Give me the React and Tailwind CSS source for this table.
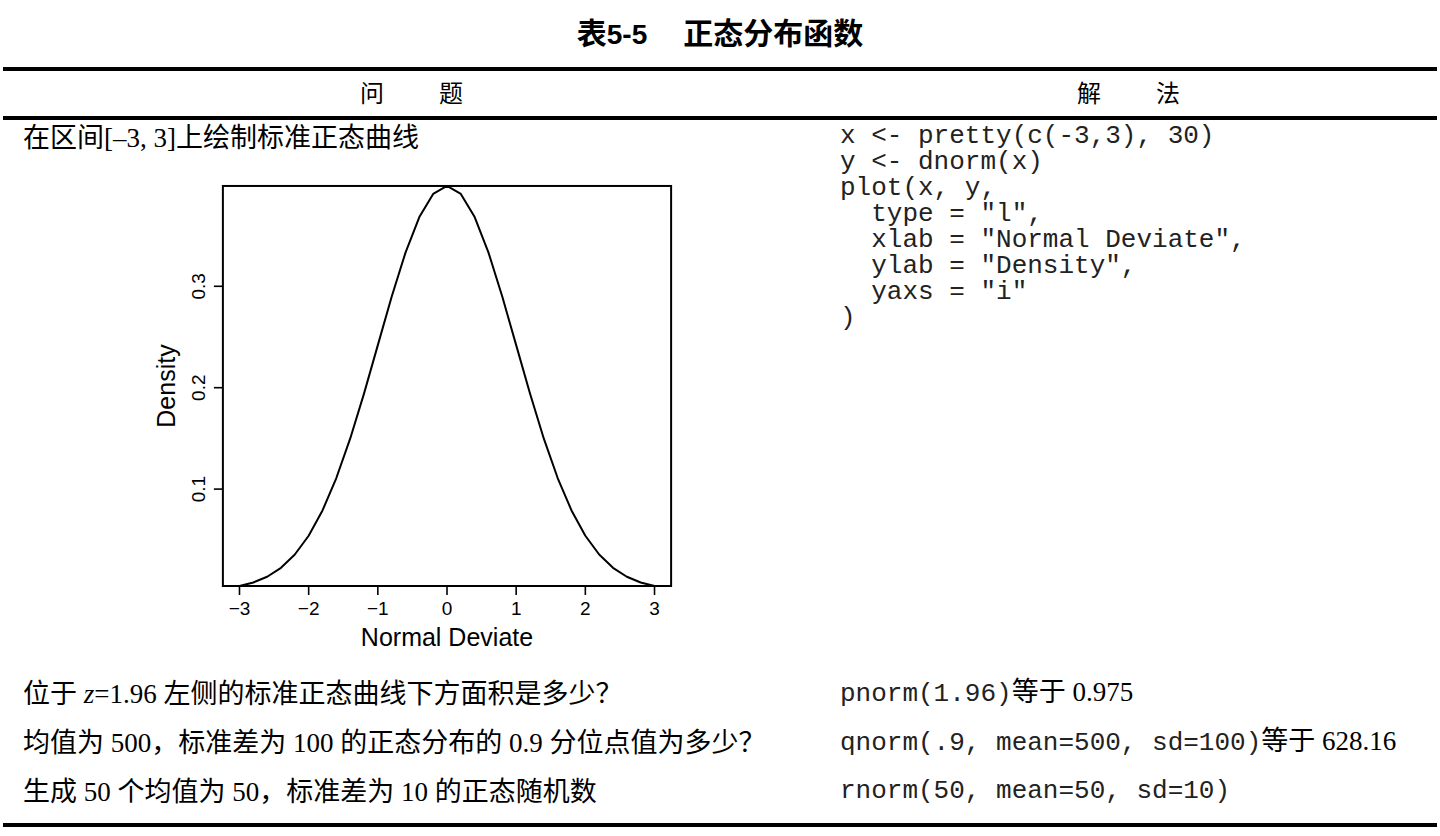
import React from 'react';

const SERIF = "font-['Liberation_Serif','Noto_Sans_CJK_SC',serif]";
const SANS = "font-['Liberation_Sans','Noto_Sans_CJK_SC',sans-serif]";
const MONO = "font-['Liberation_Mono','Noto_Sans_CJK_SC',monospace]";

// plot geometry, in page pixels
const X0 = 447;
const XU = 69.17;
const YB = 586;
const YMIN = 0.004432;
const YU = 1014;

const px = (x) => X0 + x * XU;
const py = (y) => YB - (y - YMIN) * YU;
const dnorm = (x) => Math.exp(-(x * x) / 2) / Math.sqrt(2 * Math.PI);

const CODE = [
  'x <- pretty(c(-3,3), 30)',
  'y <- dnorm(x)',
  'plot(x, y,',
  '  type = "l",',
  '  xlab = "Normal Deviate",',
  '  ylab = "Density",',
  '  yaxs = "i"',
  ')',
];

export default function App() {
  return (
    <div className="min-h-screen bg-white text-black">
      <div className={`flex h-[67px] items-center justify-center text-[30px] font-semibold ${SANS}`}>
        <span>
          表<span className="text-[28px]">5-5</span>
        </span>
        <span className="ml-[36px]">正态分布函数</span>
      </div>

      <div className="mx-[3px] border-y-4 border-black">
        <div className={`grid h-[49px] grid-cols-[817px_1fr] items-center border-b-4 border-black text-[24px] ${SANS}`}>
          <div className="flex justify-center gap-[55px]">
            <span>问</span>
            <span>题</span>
          </div>
          <div className="flex justify-center gap-[55px]">
            <span>解</span>
            <span>法</span>
          </div>
        </div>

        <div className="grid grid-cols-[817px_1fr]">
          <div className="pb-[9px] pl-[20px]">
            <p className={`h-[36px] text-[27px] leading-[36px] ${SERIF}`}>在区间[–3, 3]上绘制标准正态曲线</p>
            <NormalPlot />
          </div>
          <div className="pl-[20px] pt-[3px]">
            <pre className={`text-[26px] leading-[26px] text-[#222] ${MONO}`}>{CODE.join('\n')}</pre>
          </div>
        </div>

        <Row
          left={<>位于 <i>z</i>=1.96 左侧的标准正态曲线下方面积是多少？</>}
          code="pnorm(1.96)"
          result="等于 0.975"
        />
        <Row
          left="均值为 500，标准差为 100 的正态分布的 0.9 分位点值为多少？"
          code="qnorm(.9, mean=500, sd=100)"
          result="等于 628.16"
        />
        <Row left="生成 50 个均值为 50，标准差为 10 的正态随机数" code="rnorm(50, mean=50, sd=10)" />
        <div className="h-[7px]" />
      </div>
    </div>
  );
}

function Row({ left, code, result }) {
  return (
    <div className="grid h-[49px] grid-cols-[817px_1fr] items-center">
      <p className={`pl-[20px] text-[27px] leading-[36px] whitespace-nowrap ${SERIF}`}>{left}</p>
      <p className="pl-[20px] leading-[36px] whitespace-nowrap">
        <span className={`text-[26px] text-[#222] ${MONO}`}>{code}</span>
        {result && <span className={`text-[27px] ${SERIF}`}>{result}</span>}
      </p>
    </div>
  );
}

function NormalPlot() {
  const points = [];
  for (let i = 0; i <= 30; i++) {
    const x = -3 + i * 0.2;
    points.push(`${px(x).toFixed(2)},${py(dnorm(x)).toFixed(2)}`);
  }
  const left = px(-3.24);
  const right = px(3.24);
  const top = py(dnorm(0));
  const xTicks = [-3, -2, -1, 0, 1, 2, 3];
  const yTicks = [0.1, 0.2, 0.3];

  return (
    <svg
      className={`ml-[117px] mt-[14px] block ${SANS}`}
      width="550"
      height="490"
      viewBox="140 170 550 490"
    >
      <rect x={left} y={top} width={right - left} height={YB - top} fill="none" stroke="#000" strokeWidth="2" />
      <polyline points={points.join(' ')} fill="none" stroke="#000" strokeWidth="2" strokeLinejoin="round" />

      <line x1={px(-3)} y1={YB} x2={px(3)} y2={YB} stroke="#000" strokeWidth="2" />
      {xTicks.map((t) => (
        <g key={t}>
          <line x1={px(t)} y1={YB} x2={px(t)} y2={YB + 9} stroke="#000" strokeWidth="1.6" />
          <text x={px(t)} y="615" textAnchor="middle" fontSize="19">
            {t < 0 ? `−${-t}` : t}
          </text>
        </g>
      ))}
      {yTicks.map((t) => (
        <g key={t}>
          <line x1={left} y1={py(t)} x2={left - 9} y2={py(t)} stroke="#000" strokeWidth="1.6" />
          <text x="205" y={py(t)} textAnchor="middle" fontSize="19" transform={`rotate(-90 205 ${py(t)})`}>
            {t}
          </text>
        </g>
      ))}

      <text x={X0} y="646" textAnchor="middle" fontSize="25">Normal Deviate</text>
      <text x="175" y="386" textAnchor="middle" fontSize="25" transform="rotate(-90 175 386)">Density</text>
    </svg>
  );
}
